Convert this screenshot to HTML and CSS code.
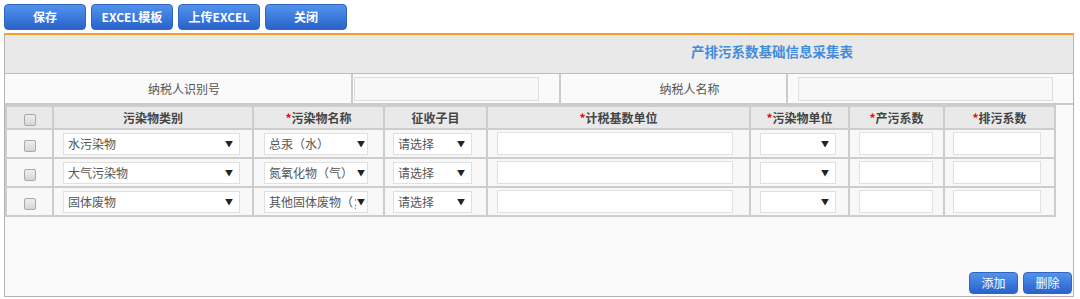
FILE: index.html
```html
<!DOCTYPE html>
<html>
  <head>
    <meta charset="utf-8">
    <title>产排污系数基础信息采集表</title>
    <link rel="stylesheet" href="styles.css">
  </head>
  <body>
    <div class="toolbar">
      <button class="btn">保存</button>
      <button class="btn">EXCEL模板</button>
      <button class="btn">上传EXCEL</button>
      <button class="btn">关闭</button>
    </div>

    <div class="panel">
      <div class="panelTitle">产排污系数基础信息采集表</div>

      <div class="infoRow">
        <div class="infoLabel first">纳税人识别号</div>
        <div class="infoField"><input class="infoInput" type="text"></div>
        <div class="infoLabel second">纳税人名称</div>
        <div class="infoField"><input class="infoInput wide" type="text"></div>
      </div>

      <table class="grid">
        <colgroup>
          <col style="width: 47px">
          <col style="width: 200px">
          <col style="width: 131px">
          <col style="width: 103px">
          <col style="width: 263px">
          <col style="width: 99px">
          <col style="width: 95px">
          <col style="width: 111px">
        </colgroup>
        <thead>
          <tr>
            <th><span class="check"></span></th>
            <th>污染物类别</th>
            <th><i>*</i>污染物名称</th>
            <th>征收子目</th>
            <th><i>*</i>计税基数单位</th>
            <th><i>*</i>污染物单位</th>
            <th><i>*</i>产污系数</th>
            <th><i>*</i>排污系数</th>
          </tr>
        </thead>
        <tbody>
          <tr>
            <td class="c"><span class="check"></span></td>
            <td><div class="sel s1">水污染物</div></td>
            <td><div class="sel s2">总汞（水）</div></td>
            <td><div class="sel s3">请选择</div></td>
            <td><input class="txt t1" type="text"></td>
            <td><div class="sel s4"></div></td>
            <td><input class="txt t2" type="text"></td>
            <td><input class="txt t3" type="text"></td>
          </tr>
          <tr>
            <td class="c"><span class="check"></span></td>
            <td><div class="sel s1">大气污染物</div></td>
            <td><div class="sel s2">氮氧化物（气）</div></td>
            <td><div class="sel s3">请选择</div></td>
            <td><input class="txt t1" type="text"></td>
            <td><div class="sel s4"></div></td>
            <td><input class="txt t2" type="text"></td>
            <td><input class="txt t3" type="text"></td>
          </tr>
          <tr>
            <td class="c"><span class="check"></span></td>
            <td><div class="sel s1">固体废物</div></td>
            <td><div class="sel s2">其他固体废物（；</div></td>
            <td><div class="sel s3">请选择</div></td>
            <td><input class="txt t1" type="text"></td>
            <td><div class="sel s4"></div></td>
            <td><input class="txt t2" type="text"></td>
            <td><input class="txt t3" type="text"></td>
          </tr>
        </tbody>
      </table>

      <div class="panelFoot">
        <button class="btn small">添加</button>
        <button class="btn small">删除</button>
      </div>
    </div>
  </body>
</html>
```

FILE: styles.css
```css
body {
  margin: 0;
  font-family: "Noto Sans CJK SC", "Liberation Sans", sans-serif;
  font-size: 12px;
  color: #444;
  background: #fff;
}

.toolbar {
  display: flex;
  gap: 5px;
  padding: 4px 0 0 4px;
  height: 29px;
}

.btn {
  width: 82px;
  height: 26px;
  padding: 0;
  border: 1px solid #2f66c4;
  border-radius: 4px;
  background: linear-gradient(#5393ea, #3a78dc 55%, #2b62c9);
  color: #fff;
  font-family: inherit;
  font-size: 12px;
  font-weight: bold;
  line-height: 24px;
}

.btn.small {
  width: 49px;
  height: 22px;
  font-weight: normal;
  font-size: 12px;
  line-height: 20px;
}

.panel {
  width: 1068px;
  height: 261px;
  margin-left: 4px;
  border: 1px solid #b4b4b4;
  border-top: 2px solid #f7a020;
  background: #f9f9f9;
  display: flex;
  flex-direction: column;
}

.panelTitle {
  height: 39px;
  padding-left: 686px;
  padding-top: 6px;
  box-sizing: border-box;
  background: #e9e9e9;
  border-bottom: 1px solid #bdbdbd;
  color: #3f8ddc;
  font-size: 13.5px;
  font-weight: bold;
  line-height: 20px;
}

.infoRow {
  display: grid;
  grid-template-columns: 348px 208px 227px 1fr;
  height: 29px;
  border-bottom: 2px solid #cbcbcb;
  background: #fafafa;
}

.infoLabel {
  border-right: 2px solid #cbcbcb;
  text-align: center;
  line-height: 29px;
  color: #555;
}

.infoLabel.first {
  padding-left: 12px;
}

.infoLabel.second {
  padding-left: 32px;
}

.infoField {
  border-right: 2px solid #cbcbcb;
  padding: 3px 0 0 1px;
}

.infoField:last-child {
  border-right: none;
  padding-left: 10px;
}

.infoInput {
  display: block;
  width: 185px;
  height: 24px;
  box-sizing: border-box;
  margin: 0;
  border: 1px solid #dedede;
  background: #f8f8f8;
}

.infoInput.wide {
  width: 255px;
}

.grid {
  width: 1049px;
  border-collapse: collapse;
  table-layout: fixed;
}

.grid th,
.grid td {
  border: 2px solid #cdcdcd;
  padding: 0;
}

.grid th {
  height: 21px;
  background: #e9e9e9;
  color: #444;
  font-weight: bold;
  font-size: 12px;
  text-align: center;
}

.grid th i {
  color: #f00;
  font-style: normal;
}

.grid td {
  height: 27px;
  background: #f8f8f8;
  padding-left: 9px;
}

.grid td.c {
  padding-left: 0;
  text-align: center;
}

.check {
  display: inline-block;
  width: 10px;
  height: 10px;
  border: 1px solid #a9a9a9;
  border-radius: 2px;
  background: linear-gradient(#eee, #d6d6d6);
  vertical-align: middle;
}

.sel {
  position: relative;
  height: 22px;
  box-sizing: border-box;
  border: 1px solid #e0e0e0;
  background: #fff;
  padding-left: 4px;
  line-height: 20px;
  font-size: 12px;
  color: #555;
  white-space: nowrap;
  overflow: hidden;
}

.sel::after {
  content: "▼";
  position: absolute;
  right: 6px;
  top: 0;
  font-size: 8px;
  color: #222;
  background: #fff;
  padding-left: 1px;
}

.s1 { width: 177px; }
.s2 { width: 104px; margin-left: 1px; }
.s2::after { right: 2px; }
.s3 { width: 79px; margin-left: -1px; }
.s4 { width: 76px; }

.txt {
  display: block;
  height: 23px;
  box-sizing: border-box;
  margin: 0;
  border: 1px solid #e0e0e0;
  background: #fff;
}

.t1 { width: 236px; }
.t2 { width: 74px; }
.t3 { width: 88px; margin-left: -1px; }

.panelFoot {
  flex: 1;
  display: flex;
  justify-content: flex-end;
  align-items: flex-end;
  gap: 5px;
  padding: 0 1px 2px 0;
}
```
